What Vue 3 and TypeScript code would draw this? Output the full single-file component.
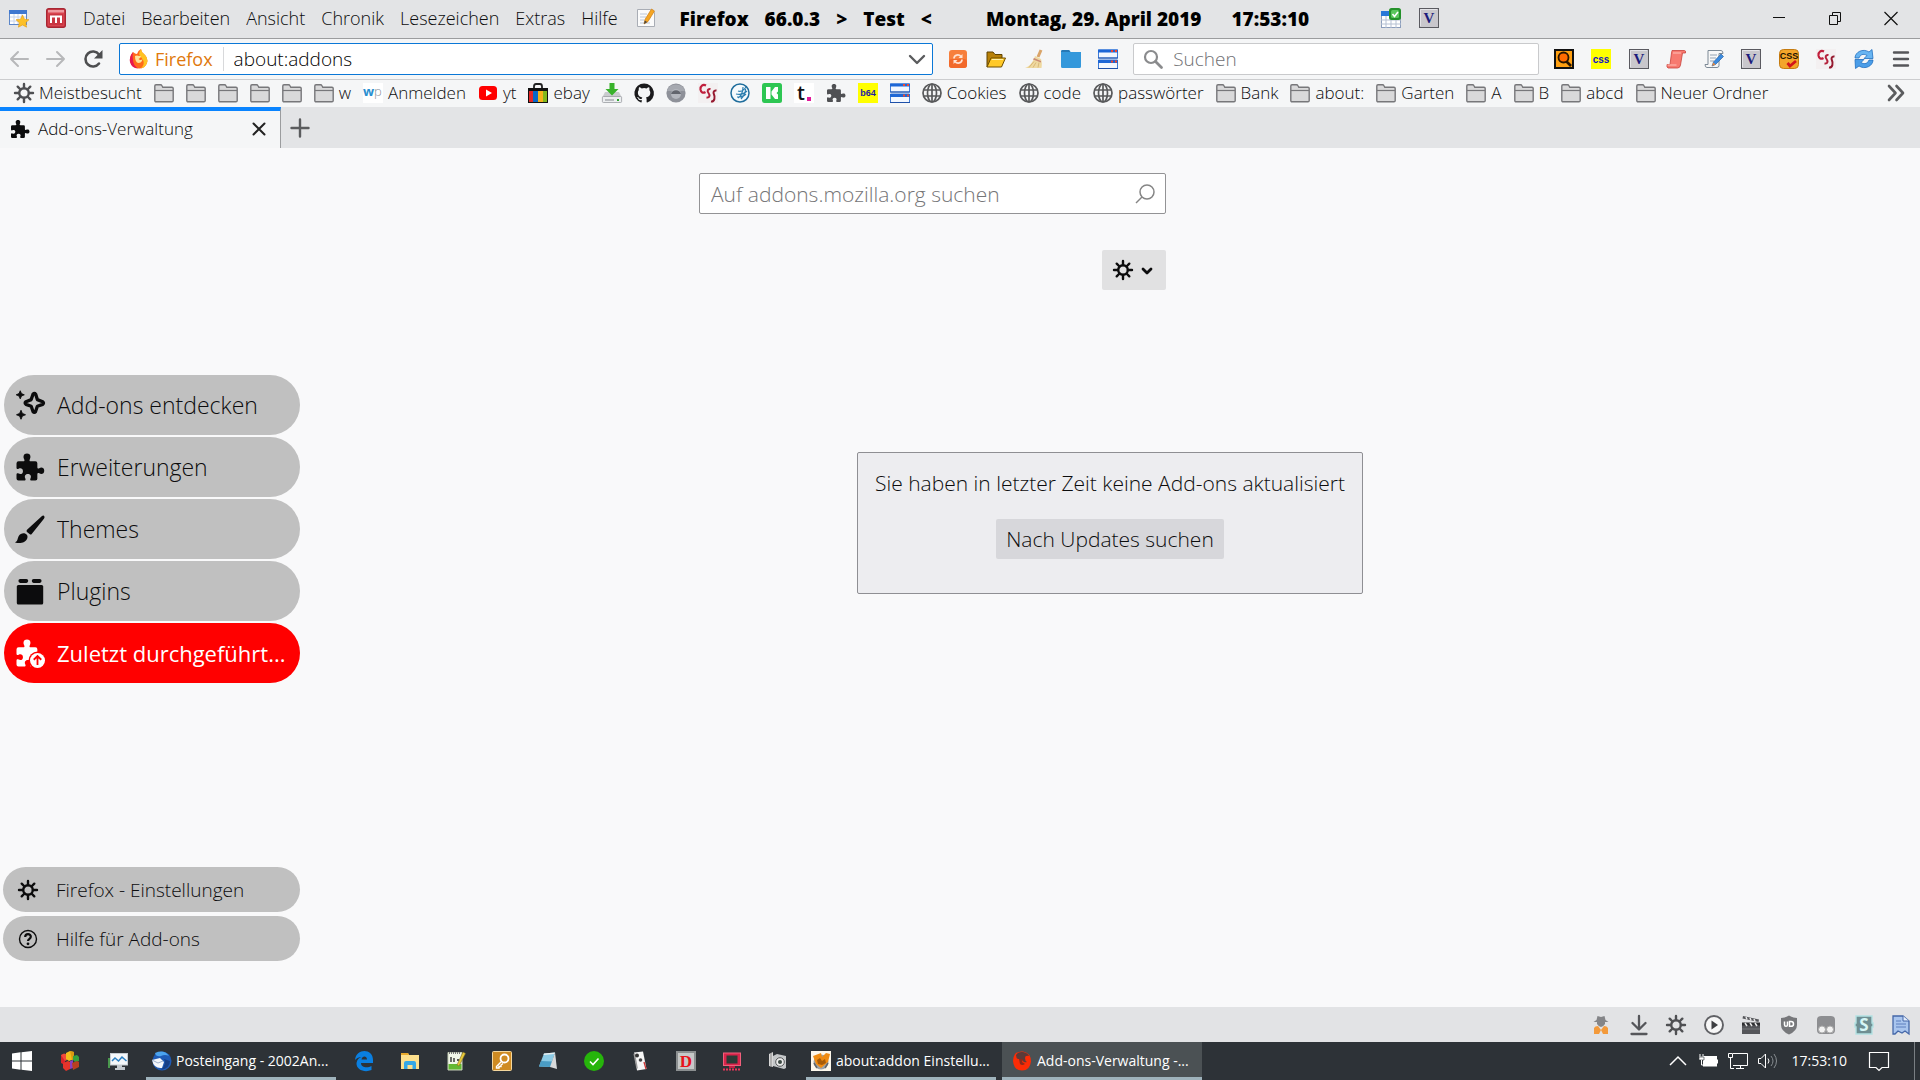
<script setup lang="ts">
interface Item {
  icon: string
  label?: string
}

const puzzle =
  '<path d="M1 7.6q0-1.4 1.400-1.400h3.100c.9 0 1-.8.6-1.400C5.300 3.400 5.500 1 8 1s2.700 2.400 1.900 3.800c-.4.6-.3 1.400.6 1.400h3.100q1.300 0 1.300 1.300v2.700c0 .8.7 1 1.300.6 1.300-.8 3.300-.5 3.300 1.700s-2 2.500-3.300 1.700c-.6-.4-1.300-.2-1.300.6v3q0 1.200-1.300 1.200h-2.500c-.9 0-1.200-.7-.8-1.400.7-1.200.3-2.900-1.700-2.900s-2.400 1.700-1.700 2.900c.4.700.1 1.400-.8 1.400H2.300Q1 19 1 17.700v-2.500c0-.9.7-1.200 1.400-.8 1.200.7 2.900.3 2.900-1.600s-1.700-2.300-2.900-1.600C1.700 11.600 1 11.300 1 10.500z"/>'

const gearSpokes =
  '<circle cx="10" cy="10" r="4.800" fill="none" stroke="currentColor" stroke-width="2.400"/><path d="M10 1v4M10 15v4M1 10h4M15 10h4M3.700 3.700l2.800 2.800M13.500 13.500l2.800 2.800M3.700 16.300l2.800-2.800M13.500 6.500l2.800-2.800" fill="none" stroke="currentColor" stroke-width="2.400" stroke-linecap="round"/>'

const vBox =
  '<rect x=".5" y=".5" width="19" height="19" fill="#c9c7cc" stroke="#5a5a60"/><path d="M1.500 18V1.500H18" stroke="#e4e4e8" fill="none"/><text x="10" y="15" text-anchor="middle" font-family="Liberation Serif, serif" font-size="15" font-weight="700" fill="#1c1c7c">V</text>'

const cssScript =
  '<rect width="20" height="20" fill="#f3f0f1"/><path d="M8 2.500C5 1 2 3 2.500 6.500 3 9.500 5 10.500 7.500 9" fill="none" stroke="#c01f3c" stroke-width="2.200"/><path d="M12.500 6c-3-.5-3.500 2-2 4s1.500 5-2 4.500" fill="none" stroke="#b3203a" stroke-width="2"/><path d="M18.500 7.500c-3-.5-3.500 2-2.500 4s1 7.500-3 7" fill="none" stroke="#961a30" stroke-width="2"/>'

const server =
  '<path d="M.5 1h19v8H.5z" fill="#f2f7ff" stroke="#3f7cd8"/><path d="M0 .5h20v3H0z" fill="#1d66d6"/><path d="M0 9h20" stroke="#1d4fa8"/><path d="M.5 11h19v8.500H.5z" fill="#f2f7ff" stroke="#3f7cd8"/><path d="M0 11h20v3H0z" fill="#1d66d6"/><path d="M0 19.500h20" stroke="#1d4fa8"/><path d="M13 2h2M17 2h2M13 12.500h2M17 12.500h2" stroke="#f04a30" stroke-width="2"/>'

const firefox =
  '<path d="M4 3q2 2 4 2 1-3.500 4-5 0 2.500 3 5 4.500 4 3 9-2 5.500-8 5.500T1 13Q.5 7 4 3z" fill="#ff6a1a"/><path d="M12 0q0 2.500 3 5 4.500 4 3 9-1.500 4.500-6 5.300 3.500-3.300 2.500-7.300Q13 9 11 7T12 0z" fill="#ffc322"/><path d="M4 3Q0 8 1 13q1.500 6 8 6.500Q4 16 4 11q-1-4 0-8z" fill="#e8184f"/><path d="M6 7q2-1 4 0h2q0 2-2.500 3 1.500 1.500 4 .5-1 3.500-4 3.500Q6 13.500 6 7z" fill="#ffe39a"/>'

const icons: Record<string, string> = {
  puzzle: `<g fill="currentColor">${puzzle}</g>`,
  gear: gearSpokes,
  vbox: vBox,
  cssScript,
  server,
  firefox,
  calendarStar:
    '<rect x=".5" y="2.500" width="17" height="14" fill="#fff" stroke="#5b86c9"/><rect y="2" width="18" height="4" fill="#3f78d0"/><path d="M1 9h16M1 13h16M5 6v10M9 6v10M13 6v10" stroke="#c8d4ea"/><path d="M13.500 7l2 4.200 4.500.5-3.300 3 .9 4.500-4.100-2.200-4.100 2.200.9-4.500-3.300-3 4.500-.5z" fill="#fcc028" stroke="#e29b10" stroke-width=".6"/>',
  mBox:
    '<rect x=".7" y=".7" width="18.600" height="18.600" rx="2" fill="#d9434e" stroke="#a82633" stroke-width="1.400"/><rect x="2" y="2" width="16" height="2.500" fill="#ef9aa0"/><rect x="3" y="6" width="14" height="11" fill="#c93642"/><path d="M5 15V8.500h10V15M10 8.500V15" stroke="#fff" stroke-width="2" fill="none"/>',
  noteEdit:
    '<path d="M1.500 1.500h13l4 3v14h-17z" fill="#fbfbfb" stroke="#a9adb5"/><path d="M4 6h7M4 9h6M4 12h4M4 15h10" stroke="#bcc7d8"/><path d="M8 16l1-4.500L15.500 1l3 2-6.500 10.500z" fill="#f6a623" stroke="#c97b16" stroke-width=".7"/><path d="M8 16l.8-3.500 2.400 1.500z" fill="#444"/>',
  calendarCheck:
    '<rect x=".5" y="4.500" width="19" height="15" fill="#fff" stroke="#8b9dbb"/><rect y="3" width="12" height="5" fill="#2878d8"/><path d="M0 12h20M0 16h20M5 8v12M10 8v12M15 8v12" stroke="#b5c0d2"/><rect x="8" y="0" width="12" height="12" rx="2.500" fill="#24912a"/><rect x="10" y="2" width="8" height="8" rx="1.500" fill="#5bc65c"/><path d="M11.500 6l2 2.500 3.500-4.500" stroke="#fff" stroke-width="1.600" fill="none"/>',
  minimize: '<path d="M4 9.500h12" stroke="#111" fill="none"/>',
  restore: '<path d="M4.500 7.500h8v9h-8zM7.500 7V4.500h8v9H13" stroke="#111" fill="none"/>',
  windowClose: '<path d="M3.500 4l13 13M16.500 4l-13 13" stroke="#111" stroke-width="1.200" fill="none"/>',
  back: '<path d="M19 10H2M9 3l-7 7 7 7" stroke="#b7b8ba" stroke-width="2" fill="none" stroke-linecap="round" stroke-linejoin="round"/>',
  forward: '<path d="M1 10h17M11 3l7 7-7 7" stroke="#b7b8ba" stroke-width="2" fill="none" stroke-linecap="round" stroke-linejoin="round"/>',
  reload: '<path d="M16 14.500A7.500 7.500 0 1 1 16 5.500" stroke="#4d4e50" stroke-width="2.600" fill="none" stroke-linecap="round"/><path d="M19.500 1v8.500H11z" fill="#4d4e50"/>',
  chevron: '<path d="M3 7l7 7 7-7" stroke="#5b5c5e" stroke-width="2.400" fill="none" stroke-linecap="round" stroke-linejoin="round"/>',
  orangeSync:
    '<rect x="1" y="1" width="18" height="18" rx="3" fill="#f77f3c"/><rect x="1" y="10" width="18" height="9" rx="3" fill="#f2692b"/><path d="M6 9.500C6 5.500 11 5 13 7.500M14 10.500c0 4-5 4.500-7 2" stroke="#ffe3d3" stroke-width="1.700" fill="none"/><path d="M14.500 5v4h-4zM5.500 15v-4h4z" fill="#ffe3d3"/>',
  openFolder:
    '<path d="M1 18V3h6l2 2.500h7V9" fill="#b88108" stroke="#5f4300"/><path d="M1 18l4-9h14.500l-4 9z" fill="#ffc928" stroke="#6d4d00"/><path d="M6 10.500h11" stroke="#fff0a8"/>',
  broom:
    '<path d="M18 1l-3 7" stroke="#d9a469" stroke-width="3"/><path d="M12 7l6 3c1 3 1 6 .5 9H2c5-2 8-6 10-12z" fill="#efd9a0"/><path d="M11 9l7 3v1.500l-8-3z" fill="#c98a74"/><path d="M6 18.500l5-6M10 18.500l3-5M15 18.500l1-5" stroke="#d9b877"/>',
  blueFolder: '<path d="M0 3q0-2 1.500-2H8l1.500 2H20v14.500q0 1.500-1.500 1.500h-17Q0 19 0 17.500z" fill="#3498db"/><path d="M0 3q0-2 1.500-2H8l1.500 2z" fill="#2779b5"/>',
  magnifier: '<circle cx="8" cy="8" r="6" stroke="#8a8b8d" stroke-width="2.200" fill="none"/><path d="M12.500 12.500l6 6" stroke="#8a8b8d" stroke-width="2.800" stroke-linecap="round"/>',
  orangeSearch:
    '<rect x="1" y="1" width="18" height="18" fill="#ffa012" stroke="#111" stroke-width="2"/><circle cx="9.500" cy="8.500" r="5" fill="#ff6a00" stroke="#2a1600" stroke-width="1.800"/><path d="M12.500 12.500l4.500 4.500" stroke="#2a1600" stroke-width="2.600"/>',
  cssYellow:
    '<rect width="20" height="20" fill="#ff0"/><text x="10" y="13.500" text-anchor="middle" font-family="Liberation Sans, sans-serif" font-size="10" font-weight="700" fill="#1212c8">css</text>',
  redScroll:
    '<path d="M6 1.500h12.500q1.500 0 1 2.500h-3l-2 12q-.5 3-3 3H2q-1.500-.5-1-3.500h3L5.500 4Q6 1.500 6 1.500z" fill="#f77a70" stroke="#c9433c" stroke-width=".8"/><path d="M7 4h8M1.500 16h9" stroke="#ffc0b8"/>',
  scrollEdit:
    '<path d="M4 1.500h13q2 0 2 3h-4v12q0 2-2 2H3q-2 0-2-3h3z" fill="#f7f7f7" stroke="#7d8a96"/><path d="M6 6h7M6 9h6M6 12h4" stroke="#94a3b3"/><path d="M8 17l1.500-4L17 5l2.500 2.500-8 8z" fill="#3b8be0" stroke="#1d5597" stroke-width=".6"/><path d="M8 17l1.300-3.600 2.300 2z" fill="#e9893b"/>',
  cssOrange:
    '<rect x=".5" y=".5" width="19" height="19" rx="4" fill="#f3a52a" stroke="#c47b10"/><text x="10" y="9.500" text-anchor="middle" font-family="Liberation Sans, sans-serif" font-size="9" font-weight="700" fill="#1d1200">CSS</text><path d="M8.500 14l2.500 3 6-5" stroke="#d3151b" stroke-width="2.800" fill="none"/>',
  blueSync:
    '<path d="M1 9C1 3 9-1 15 3l3-2.500 1 9h-9l3-3C9 4 6 6 5 9z" fill="#68b5f2" stroke="#1f6fc0" stroke-width=".8"/><path d="M19 11c0 6-8 10-14 6l-3.500 2.500-.5-9h9l-3 3c4 2.500 7 .5 8-2.500z" fill="#4a9de8" stroke="#1f6fc0" stroke-width=".8"/>',
  menu: '<path d="M3 3.500h14M3 10h14M3 16.500h14" stroke="#55565a" stroke-width="2.400" stroke-linecap="round"/>',
  folder:
    '<path d="M.8 17.500V3q0-1.200 1.200-1.200h4.500q1 0 1.500 1l.8 1.500H18q1.200 0 1.200 1.200v12q0 1.200-1.200 1.200H2q-1.200 0-1.200-1.200z" fill="#d9d9da" stroke="#77777a" stroke-width="1.400"/><path d="M1 7.500h18" stroke="#77777a" stroke-width="1.200"/>',
  wp: '<rect width="20" height="20" fill="#fff"/><text x="0" y="13" font-family="Open Sans, sans-serif" font-size="13" font-weight="700" fill="#2a8fd0">w</text><text x="11" y="13" font-family="Open Sans, sans-serif" font-size="13" fill="#8a8f96">p</text>',
  youtube: '<rect x="1" y="3" width="18" height="14" rx="3.500" fill="#f00"/><path d="M8 6.500v7l6-3.500z" fill="#fff"/>',
  ebay:
    '<path d="M6 6V3.500Q6 1 8 1h4q2 0 2 2.500V6" stroke="#222" stroke-width="1.800" fill="none"/><path d="M0 5h20v4H0z" fill="#111"/><path d="M0 8h5v12H0z" fill="#e32828"/><path d="M5 8h5v12H5z" fill="#0868c9"/><path d="M10 8h5v12h-5z" fill="#f6b21b"/><path d="M15 8h5v12h-5z" fill="#82b81c"/><path d="M0 19h20v1H0zM0 5h1v15H0zM19 5h1v15h-1z" fill="#111"/>',
  drive:
    '<path d="M3 9h14l3 6H0z" fill="#c9cbce"/><rect x=".4" y="13.500" width="19.200" height="6" rx="1" fill="#eceef0" stroke="#9a9da2" stroke-width=".8"/><path d="M3 17h9" stroke="#85898f"/><path d="M15 17h2" stroke="#2aa62c" stroke-width="2"/><path d="M7.500 0h5v6h4L10 12.500 3.500 6h4z" fill="#38b22b"/>',
  github:
    '<path d="M10 .5a9.700 9.700 0 0 0-3 18.900c.5.1.7-.2.7-.5v-1.800c-2.800.6-3.300-1.200-3.300-1.200-.4-1.100-1.100-1.400-1.100-1.400-.9-.6.1-.6.1-.6 1 .1 1.500 1 1.500 1 .9 1.500 2.300 1.100 2.900.8.100-.6.3-1.100.6-1.300-2.200-.3-4.500-1.100-4.500-4.800 0-1.100.4-2 1-2.600-.1-.3-.4-1.300.1-2.600 0 0 .8-.3 2.700 1a9.200 9.200 0 0 1 4.900 0c1.800-1.300 2.600-1 2.600-1 .5 1.300.2 2.300.1 2.600.6.700 1 1.500 1 2.600 0 3.700-2.200 4.500-4.400 4.800.4.300.7.900.7 1.800v2.700c0 .3.200.6.7.5A9.700 9.700 0 0 0 10 .5z" fill="#1a1a1c"/>',
  sphere: '<circle cx="10" cy="10" r="9.600" fill="#8e9199"/><path d="M1 8a9.500 9.500 0 0 1 18 0z" fill="#a6a9b0"/><circle cx="10" cy="11" r="5" fill="#b4b7be"/><path d="M5 11a5.200 5.200 0 0 1 10 0z" fill="#62656d"/>',
  blueGlobe:
    '<circle cx="10" cy="10" r="9" fill="#f6fafc" stroke="#1f6d9c" stroke-width="1.500"/><path d="M8 8c3 1 6-1 8-4M6 11c4 1 8 0 11-3M8 15c3-2 5-6 5-11M11 16c3-3 4.500-6 4.500-10M7 14c4 0 7-1 9-3" stroke="#2d7fb0" stroke-width="1.200" fill="none"/>',
  greenK: '<rect width="20" height="20" rx="2.500" fill="#2dc653"/><path d="M4 4h4.500v12H4zM9.500 8.500L13 4h3v4.500L14.500 10l1.500 1.500V16h-3l-3.500-4.500z" fill="#fff"/>',
  tDot: '<rect width="20" height="20" fill="#fff"/><text x="3" y="17" font-family="Open Sans, sans-serif" font-size="20" font-weight="600" fill="#111">t</text><rect x="13" y="14" width="4" height="4" fill="#e0189a"/>',
  b64: '<rect width="20" height="20" fill="#ff0"/><text x="10" y="13" text-anchor="middle" font-family="Liberation Sans, sans-serif" font-size="9" font-weight="700" fill="#1c1ca0">b64</text>',
  globe:
    '<g fill="none" stroke="#58595b" stroke-width="1.700"><circle cx="10" cy="10" r="9"/><ellipse cx="10" cy="10" rx="4.500" ry="9"/><path d="M10 1v18M2 7h16M2 13h16"/></g>',
  overflow: '<path d="M3 3l6.500 7L3 17M10.500 3l6.500 7-6.500 7" stroke="#5b5c5e" stroke-width="2.600" fill="none" stroke-linecap="round" stroke-linejoin="round"/>',
  tabClose: '<path d="M4.500 4.500l11 11M15.500 4.500l-11 11" stroke="#222" stroke-width="2" stroke-linecap="round"/>',
  plus: '<path d="M10 1.500v17M1.500 10h17" stroke="#5b5c5e" stroke-width="2.400" stroke-linecap="round"/>',
  lens: '<circle cx="12" cy="8" r="7" stroke="#858585" stroke-width="1.500" fill="none"/><path d="M7 13l-6 6" stroke="#858585" stroke-width="1.500"/>',
  smallChevron: '<path d="M6 9l4 4 4-4" stroke="currentColor" stroke-width="2.800" fill="none" stroke-linecap="round" stroke-linejoin="round"/>',
  sparkle:
    '<path d="M12 2.800Q13 1.800 13.800 2.800l1.100 3.600 3.600 1.400q1 .8 0 1.800l-3.600 1.200-1.200 3.600q-.8 1-1.700 0l-1.200-3.600-3.500-1.200q-1.100-1 0-1.800l3.500-1.400z" fill="none" stroke="currentColor" stroke-width="2.200" stroke-linejoin="round"/><path d="M3.500.5l.8 1.900 1.900.8-1.900.8-.8 1.900-.8-1.900-1.900-.8 1.900-.8zM4 13.500l.9 2.100 2.100.9-2.100.9-.9 2.100-.9-2.100-2.100-.9 2.100-.9z" fill="currentColor" stroke="currentColor" stroke-width=".6"/>',
  brush:
    '<path d="M8 10.500L18 1.300q1.200-.6 1.600.4.300.7-.3 1.500L11 13.500Q10.500 14 9.700 13.300L8 12q-.7-.7 0-1.500z" fill="currentColor"/><path d="M7 13.200q1.800.8 1.200 3C7 19.500 3 19.800 0 19c2-1 1.500-2.500 2.500-4.300 1-1.600 2.900-2.200 4.500-1.500z" fill="currentColor"/>',
  brick: '<rect x="1.200" y="6" width="17.600" height="13" rx="1" fill="currentColor"/><rect x="2.300" y="2" width="6.500" height="2.600" rx="1.200" fill="currentColor"/><rect x="11.200" y="2" width="6.500" height="2.600" rx="1.200" fill="currentColor"/>',
  puzzleUpdate: `<g fill="currentColor">${puzzle}</g><circle cx="15" cy="15" r="6" fill="#f00"/><circle cx="15" cy="15" r="5" fill="#fff"/><path d="M15 18v-5.500M12.500 14.500L15 12l2.500 2.500" stroke="#f00" stroke-width="1.200" fill="none"/>`,
  help: '<circle cx="10" cy="10" r="8.500" fill="none" stroke="currentColor" stroke-width="1.400"/><path d="M7.200 8c0-3.800 5.800-3.600 5.600-.2 0 2-2.800 2-2.800 4.200" fill="none" stroke="currentColor" stroke-width="2.200"/><circle cx="10" cy="14.800" r="1.400" fill="currentColor"/>',
  spy:
    '<path d="M2.500 7h15L14.500 5 13.500 1 10 2 6.500 1l-1 4zM6 7h8v2q-2 3-4 3T6 9z" fill="#848588"/><path d="M3 13q1-2 4-2l3 4 3-4q3 0 4 2v6h-5l-2-4-2 4H3z" fill="#f39a3b"/>',
  download: '<path d="M10 1v13M3.500 8L10 14.500 16.500 8M2.500 19h15" stroke="#55565a" stroke-width="2.300" fill="none" stroke-linecap="round" stroke-linejoin="round"/>',
  play: '<circle cx="10" cy="10" r="9" fill="#f7f7f7" stroke="#606165" stroke-width="1.900"/><path d="M7.500 5.500v9l6.500-4.500z" fill="#3e3f42"/>',
  clapper:
    '<path d="M1 9h18v10H1z" fill="#55565a"/><path d="M1 7.500h18v3H1z" fill="#2e2f31"/><path d="M2 1l16 3.500-.5 2.500L1.500 3.500z" fill="#55565a"/><path d="M5 2l1 2.500M9 3l1 2.500M13 4l1 2.500M4 8l2 3M9 8l2 3M14 8l2 3" stroke="#e8e8e8" stroke-width="1.500"/><path d="M1 14h18" stroke="#77787b"/>',
  ublock:
    '<path d="M10 .5q4 2.500 8 2.500v7q0 6-8 9.500Q2 16 2 10V3q4 0 8-2.500z" fill="#77787b"/><path d="M5.500 6.500v3.200q0 1.600 1.500 1.600t1.500-1.600V6.500" stroke="#fff" stroke-width="1.500" fill="none"/><path d="M10.500 6.500h1.500q2.500 0 2.500 2.400T12 11.300h-1.500z" stroke="#fff" stroke-width="1.500" fill="none"/>',
  eyes: '<rect x="1" y="1" width="18" height="18" rx="4" fill="#8d8e91"/><circle cx="6" cy="14.500" r="3.500" fill="#f2f2f2" stroke="#aaa"/><circle cx="14" cy="14.500" r="3.500" fill="#f2f2f2" stroke="#aaa"/>',
  stylus: '<path d="M2 1h16v7h1v4h-1v7H2v-7H1V8h1z" fill="#6f8f93" stroke="#b4e2e3" stroke-width="1.400"/><text x="10" y="16" text-anchor="middle" font-family="Open Sans, sans-serif" font-size="17" font-weight="700" fill="#d6f6f6">S</text>',
  page: '<path d="M2 1h10l6 5v13l-4-3-3 2-4-2-3 3H2z" fill="#a9c5ee" stroke="#4467a8" stroke-width="1.300"/><path d="M12 1v5h6" fill="#e4eefc" stroke="#4467a8"/><path d="M5 6h5M5 9h10M5 12h10" stroke="#5d7fbe"/>',
  windows: '<path d="M0 2.500L8.500 1.300V9.500H0zM9.500 1.200L20 0v9.500H9.500zM0 10.500h8.500v8.200L0 17.500zM9.500 10.500H20V20L9.500 18.800z" fill="#fff"/>',
  cubes:
    '<path d="M1 4l4-1v11l-4-2z" fill="#d8232a"/><path d="M1 4l3-1.500 3 1V9l-2 1z" fill="#f04a3a"/><path d="M6 2l4-2 4 1v7l-5 2-3-2z" fill="#f2bd1c"/><path d="M10 0l4 1v7l-2 1z" fill="#d99a10"/><path d="M13 5l4-1 2 2v4l-4 1-2-2z" fill="#35a13f"/><path d="M3 12l5-2 2 1v7l-4 2-3-3z" fill="#e5342b"/><path d="M10 10l3-1v8l-3 1z" fill="#8a3fc0"/><path d="M12 12l5-2 2 1v5l-6 3z" fill="#b8401f"/>',
  monitor:
    '<rect x="2.500" y="2.500" width="17" height="11.500" fill="#f4f7fa" stroke="#c6ccd2"/><path d="M4 10l3-3 3.500 3L14 6l4.500 4" stroke="#2b7fc2" stroke-width="1.500" fill="none"/><path d="M9 14h5v2h3v3H7v-2h2z" fill="#c2c8ce"/><path d="M1 7v10" stroke="#5bd15b" stroke-width="1.300"/>',
  thunderbird:
    '<circle cx="11" cy="10" r="9.500" fill="#1f5bb5"/><path d="M4 2q9-4 14 3-4-2-8 0Q5 6 4 2z" fill="#4ba3ee"/><path d="M1 9l8-2 4 4-2 6Q3 18 1 9z" fill="#f4f6fa"/><path d="M1 9l6 3 5-2" stroke="#9bb0cc" fill="none"/><path d="M13 8q3 4-3 11 9-2 9-9z" fill="#163f86"/>',
  edge: '<path d="M1 9C2-3 19-3 19 9v3H7c0 5 7 5 10.500 3v4C11 22 2 19 2.500 12 3 8.500 5 7 7.500 6 4.500 6 2 7.500 1 9zm6.500-.5H13c0-4-5-4-5.500 0z" fill="#0a7fe0"/>',
  explorer: '<path d="M1 2h7l1 2h10v14H1z" fill="#fde08d"/><path d="M1 2h7l1 2H1z" fill="#e8a92c"/><path d="M4 18v-6q0-2 2-2h8q2 0 2 2v6h-3.500v-4h-5v4z" fill="#35a8e6"/>',
  notepad:
    '<path d="M2 1.500h14V19H2z" fill="#f1f6e8" stroke="#c3ccb5"/><path d="M2.500 13h13v5.500h-13z" fill="#63b832"/><path d="M3 2h12" stroke="#777" stroke-width="2" stroke-dasharray="1 1"/><path d="M5 6v5M8 7v4M11 9h2" stroke="#222" stroke-width="1.300"/><path d="M11 14L17 1l2.500 1.500L13 15z" fill="#e8c93a" stroke="#7a6a20" stroke-width=".6"/>',
  key: '<rect x=".5" y=".5" width="19" height="19" rx="1" fill="#cf8b22" stroke="#f4d79e"/><circle cx="12.500" cy="7.500" r="4" fill="none" stroke="#fff" stroke-width="1.800"/><path d="M9.500 10.500L4.500 15.500V17H7v-1.500h2V14l2-1.500" fill="none" stroke="#fff" stroke-width="1.400"/>',
  clipNote: '<path d="M6 2.500L17 1.500 12.500 16 1 15.500z" fill="#8ccbe6"/><path d="M3 10l11.500.5L12.500 16 1 15.500z" fill="#4a9cc4"/><path d="M6 2.500l11-1-.5 1.500L5.500 4z" fill="#e9eef0"/><path d="M17 1.500L19 18l-7-2z" fill="#d8dadb"/>',
  check: '<circle cx="10" cy="10" r="10" fill="#26b50b"/><path d="M6 10.500l3 3 5.500-6" stroke="#fff" stroke-width="1.600" fill="none"/>',
  card: '<path d="M4 1.500l9-1L16.500 18 7 19.500z" fill="#f6f6f6"/><path d="M3.500 3L5 2l3 16-2-2z" fill="#9c9c9c"/><circle cx="7" cy="4.500" r="2" fill="#333"/><circle cx="10.500" cy="9" r="1.800" fill="#444"/><path d="M14 11l2 7" stroke="#c33" stroke-width="1.300"/>',
  dBox:
    '<rect x="1" y="1" width="18" height="18" fill="#c6c8c8" stroke="#8b8f90" stroke-width="2"/><text x="10" y="16" text-anchor="middle" font-family="Liberation Serif, serif" font-size="17" font-weight="700" fill="#e8131a">D</text>',
  redMonitor: '<rect x="1.500" y="2" width="17" height="12.500" fill="#d8254a" stroke="#f0607c"/><rect x="4.500" y="4.500" width="11" height="8" fill="#2b3a36"/><path d="M7 15h6v2H7z" fill="#c41f42"/><path d="M1 18.500h18" stroke="#e8375a" stroke-width="2" stroke-dasharray="2 1"/>',
  camera: '<path d="M1 3l4-2v15l-4-1z" fill="#d8d8d8"/><path d="M3 2v14" stroke="#888"/><path d="M5 5l4-2 9 2v12l-2 1-11-3z" fill="#c4c7c9"/><circle cx="12" cy="11" r="4.300" fill="#ececec" stroke="#55585a"/><circle cx="12" cy="11" r="2" fill="#3c4a44"/>',
  orangeBug: '<rect width="20" height="20" fill="#fdf8ec"/><circle cx="10" cy="11" r="7.500" fill="#9fa4a8"/><path d="M2 5l8-3 1 4 4-4 4 1-2 8-7 6-5-4z" fill="#f08c12"/><path d="M6 9l3-2 2 3 3-2 1 4-4 2-4-1z" fill="#a85c08"/><path d="M3 12l3 5M17 12l-3 5" stroke="#5f656a" stroke-width="1.500"/>',
  redFox: '<path d="M3 3q3-3 8-2.500 8 1.500 8 10-1 9-9 9T1 10Q1 6 3 3z" fill="#fb2c06"/><path d="M4 4q2-3.500 7-3 5 1 6 4-4-1-4 2t2 4q-3 1-4-1L9 8 6 8Q4 7 4 4z" fill="#5b3a38"/><path d="M7 8h4l-1 3 3 2q-3 2-5 0z" fill="#8b2a1c"/>',
  trayUp: '<path d="M2 14l8-8 8 8" stroke="#fff" stroke-width="1.500" fill="none"/>',
  battery: '<rect x="5.500" y="5.500" width="13" height="9.500" fill="#fff" stroke="#fff"/><path d="M19.500 8.500v4" stroke="#fff"/><path d="M1 6h5M2 3v3M5 3v3" stroke="#fff" fill="none"/><path d="M1 6h5v3H1z" fill="#fff" stroke="#2d3237" stroke-width=".6"/><path d="M3.500 9v5h2" stroke="#fff" fill="none"/>',
  network: '<path d="M5 2.500h14.500v12H5M12.500 14.500V17M8 17.500h8M.5 2.500h4v4h-4zM2.500 6.500v11H6" stroke="#fff" fill="none"/>',
  speaker: '<path d="M.5 7.500H3L7.500 3v14L3 12.500H.5z" stroke="#fff" fill="none"/><path d="M10 7.500q2 2.500 0 5" stroke="#fff" fill="none"/><path d="M13 5q4 5 0 10M16 3q5 7 0 14" stroke="#888e92" fill="none"/>',
  notification: '<path d="M.5 1.500h19v15h-6.500L10 19.500 7 16.500H.5z" stroke="#fff" stroke-width="1.200" fill="none"/>',
}

const menuItems: string[] = ['Datei', 'Bearbeiten', 'Ansicht', 'Chronik', 'Lesezeichen', 'Extras', 'Hilfe']
const titleParts: string[] = ['Firefox', '66.0.3', '>', 'Test', '<']
const navIcons: string[] = ['orangeSync', 'openFolder', 'broom', 'blueFolder', 'server']
const toolIcons: string[] = ['orangeSearch', 'cssYellow', 'vbox', 'redScroll', 'scrollEdit', 'vbox', 'cssOrange', 'cssScript', 'blueSync', 'menu']

const bookmarks: Item[] = [
  { icon: 'gear', label: 'Meistbesucht' },
  { icon: 'folder' },
  { icon: 'folder' },
  { icon: 'folder' },
  { icon: 'folder' },
  { icon: 'folder' },
  { icon: 'folder', label: 'w' },
  { icon: 'wp', label: 'Anmelden' },
  { icon: 'youtube', label: 'yt' },
  { icon: 'ebay', label: 'ebay' },
  { icon: 'drive' },
  { icon: 'github' },
  { icon: 'sphere' },
  { icon: 'cssScript' },
  { icon: 'blueGlobe' },
  { icon: 'greenK' },
  { icon: 'tDot' },
  { icon: 'puzzle' },
  { icon: 'b64' },
  { icon: 'server' },
  { icon: 'globe', label: 'Cookies' },
  { icon: 'globe', label: 'code' },
  { icon: 'globe', label: 'passwörter' },
  { icon: 'folder', label: 'Bank' },
  { icon: 'folder', label: 'about:' },
  { icon: 'folder', label: 'Garten' },
  { icon: 'folder', label: 'A' },
  { icon: 'folder', label: 'B' },
  { icon: 'folder', label: 'abcd' },
  { icon: 'folder', label: 'Neuer Ordner' },
]

const categories: Item[] = [
  { icon: 'sparkle', label: 'Add-ons entdecken' },
  { icon: 'puzzle', label: 'Erweiterungen' },
  { icon: 'brush', label: 'Themes' },
  { icon: 'brick', label: 'Plugins' },
  { icon: 'puzzleUpdate', label: 'Zuletzt durchgeführt...' },
]
const activeCategory = 4

const footerLinks: Item[] = [
  { icon: 'gear', label: 'Firefox - Einstellungen' },
  { icon: 'help', label: 'Hilfe für Add-ons' },
]

const statusIcons: string[] = ['spy', 'download', 'gear', 'play', 'clapper', 'ublock', 'eyes', 'stylus', 'page']
const pinnedLeft: string[] = ['windows', 'cubes', 'monitor']
const pinnedRight: string[] = ['edge', 'explorer', 'notepad', 'key', 'clipNote', 'check', 'card', 'dBox', 'redMonitor', 'camera']
const trayIcons: string[] = ['trayUp', 'battery', 'network', 'speaker']
</script>

<template>
  <div class="desktop">
    <header class="menubar">
      <button class="icon-btn" aria-label="calendarStar"><svg class="ico" viewBox="0 0 20 20" v-html="icons.calendarStar"></svg></button>
      <button class="icon-btn second" aria-label="mBox"><svg class="ico" viewBox="0 0 20 20" v-html="icons.mBox"></svg></button>
      <nav class="menus">
        <button v-for="m in menuItems" :key="m">{{ m }}</button>
      </nav>
      <button class="icon-btn" aria-label="noteEdit"><svg class="ico" viewBox="0 0 20 20" v-html="icons.noteEdit"></svg></button>
      <div class="title">
        <span v-for="t in titleParts" :key="t">{{ t }}</span>
      </div>
      <div class="date">Montag, 29. April 2019</div>
      <div class="time">17:53:10</div>
      <div class="menubar-icons">
        <button v-for="n in ['calendarCheck', 'vbox']" :key="n" class="icon-btn" :aria-label="n">
          <svg class="ico" viewBox="0 0 20 20" v-html="icons[n]"></svg>
        </button>
      </div>
      <div class="window-controls">
        <button v-for="n in ['minimize', 'restore', 'windowClose']" :key="n" class="icon-btn" :aria-label="n">
          <svg class="ico" viewBox="0 0 20 20" v-html="icons[n]"></svg>
        </button>
      </div>
    </header>

    <div class="navbar">
      <div class="nav-buttons">
        <button v-for="n in ['back', 'forward', 'reload']" :key="n" class="icon-btn" :aria-label="n">
          <svg class="ico" viewBox="0 0 20 20" v-html="icons[n]"></svg>
        </button>
      </div>
      <div class="urlbar">
        <svg class="ico" viewBox="0 0 20 20" v-html="icons.firefox"></svg>
        <span class="identity">Firefox</span>
        <input type="text" value="about:addons" aria-label="Adresse" />
        <button class="icon-btn" aria-label="chevron"><svg class="ico" viewBox="0 0 20 20" v-html="icons.chevron"></svg></button>
      </div>
      <div class="nav-icons">
        <button v-for="n in navIcons" :key="n" class="icon-btn" :aria-label="n">
          <svg class="ico" viewBox="0 0 20 20" v-html="icons[n]"></svg>
        </button>
      </div>
      <div class="searchbar">
        <svg class="ico" viewBox="0 0 20 20" v-html="icons.magnifier"></svg>
        <input type="text" placeholder="Suchen" aria-label="Suchen" />
      </div>
      <div class="tool-icons">
        <button v-for="(n, i) in toolIcons" :key="i" class="icon-btn" :aria-label="n">
          <svg class="ico" viewBox="0 0 20 20" v-html="icons[n]"></svg>
        </button>
      </div>
    </div>

    <div class="bookmarks">
      <div class="bookmark-list">
        <a v-for="(b, i) in bookmarks" :key="i" href="#" :aria-label="b.label ?? b.icon">
          <svg class="ico" viewBox="0 0 20 20" v-html="icons[b.icon]"></svg>
          <span v-if="b.label">{{ b.label }}</span>
        </a>
      </div>
      <button class="icon-btn" aria-label="overflow"><svg class="ico" viewBox="0 0 20 20" v-html="icons.overflow"></svg></button>
    </div>

    <div class="tabbar">
      <div class="tab">
        <svg class="ico" viewBox="0 0 20 20" v-html="icons.puzzle"></svg>
        <span>Add-ons-Verwaltung</span>
        <button class="icon-btn" aria-label="tabClose"><svg class="ico" viewBox="0 0 20 20" v-html="icons.tabClose"></svg></button>
      </div>
      <button class="icon-btn new-tab" aria-label="plus"><svg class="ico" viewBox="0 0 20 20" v-html="icons.plus"></svg></button>
    </div>

    <div class="page">
      <aside class="sidebar">
        <nav class="categories">
          <button v-for="(c, i) in categories" :key="c.label" :class="{ active: i === activeCategory }">
            <svg class="ico-large" viewBox="0 0 20 20" v-html="icons[c.icon]"></svg>
            <span>{{ c.label }}</span>
          </button>
        </nav>
        <nav class="footer-links">
          <a v-for="f in footerLinks" :key="f.label" href="#">
            <svg class="ico" viewBox="0 0 20 20" v-html="icons[f.icon]"></svg>
            <span>{{ f.label }}</span>
          </a>
        </nav>
      </aside>
      <main class="content">
        <div class="header">
          <div class="addon-search">
            <input type="text" placeholder="Auf addons.mozilla.org suchen" aria-label="Auf addons.mozilla.org suchen" />
            <svg class="ico" viewBox="0 0 20 20" v-html="icons.lens"></svg>
          </div>
          <button class="options" aria-label="gear">
            <svg class="ico" viewBox="0 0 20 20" v-html="icons.gear"></svg>
            <svg class="ico" viewBox="0 0 20 20" v-html="icons.smallChevron"></svg>
          </button>
        </div>
        <section class="notice">
          <p>Sie haben in letzter Zeit keine Add-ons aktualisiert</p>
          <button>Nach Updates suchen</button>
        </section>
      </main>
    </div>

    <div class="statusbar">
      <div class="status-icons">
        <button v-for="n in statusIcons" :key="n" class="icon-btn" :aria-label="n">
          <svg class="ico" viewBox="0 0 20 20" v-html="icons[n]"></svg>
        </button>
      </div>
    </div>

    <footer class="taskbar">
      <div class="pinned first">
        <button v-for="n in pinnedLeft" :key="n" class="icon-btn" :aria-label="n">
          <svg class="ico" viewBox="0 0 20 20" v-html="icons[n]"></svg>
        </button>
      </div>
      <button class="task">
        <svg class="ico" viewBox="0 0 20 20" v-html="icons.thunderbird"></svg>
        <span>Posteingang - 2002An...</span>
      </button>
      <div class="pinned">
        <button v-for="n in pinnedRight" :key="n" class="icon-btn" :aria-label="n">
          <svg class="ico" viewBox="0 0 20 20" v-html="icons[n]"></svg>
        </button>
      </div>
      <button class="task">
        <svg class="ico" viewBox="0 0 20 20" v-html="icons.orangeBug"></svg>
        <span>about:addon Einstellu...</span>
      </button>
      <button class="task current">
        <svg class="ico" viewBox="0 0 20 20" v-html="icons.redFox"></svg>
        <span>Add-ons-Verwaltung -...</span>
      </button>
      <div class="tray">
        <button v-for="n in trayIcons" :key="n" class="icon-btn" :aria-label="n">
          <svg class="ico" viewBox="0 0 20 20" v-html="icons[n]"></svg>
        </button>
        <span class="clock">17:53:10</span>
        <button class="icon-btn" aria-label="notification">
          <svg class="ico" viewBox="0 0 20 20" v-html="icons.notification"></svg>
        </button>
      </div>
    </footer>
  </div>
</template>

<style>
body {
  margin: 0;
}
</style>

<style scoped>
.desktop {
  display: flex;
  flex-direction: column;
  min-height: 100vh;
  background: #f9f9fa;
  color: #0c0c0d;
  font-family: 'Open Sans', 'Noto Sans', sans-serif;
  font-weight: 300;
  font-size: 18px;
  line-height: 24px;
  white-space: nowrap;
}
button,
input {
  border: 0;
  padding: 0;
  margin: 0;
  background: none;
  color: inherit;
  font: inherit;
}
input {
  outline: 0;
  min-width: 0;
  height: 30px;
  line-height: 30px;
}
a {
  color: inherit;
  text-decoration: none;
}
.icon-btn {
  display: flex;
  flex: none;
}
.ico,
.ico-large {
  display: block;
  flex: none;
  overflow: visible;
  width: 20px;
  height: 20px;
}
.ico-large {
  width: 30px;
  height: 30px;
}

.menubar {
  display: flex;
  align-items: center;
  box-sizing: border-box;
  height: 39px;
  padding: 0 19px 2px 9px;
  background: #e3e4e6;
  border-bottom: 1px solid #9b9c9e;
}
.menubar .second {
  margin-left: 17px;
}
.menus {
  display: flex;
  gap: 16px;
  margin: 0 18px 0 17px;
}
.title,
.date,
.time {
  padding-top: 2px;
  color: #000;
  font-size: 19px;
  font-weight: 800;
}
.title {
  display: flex;
  gap: 16px;
  margin-left: 24px;
}
.date {
  margin-left: 54px;
}
.time {
  margin-left: 30px;
}
.menubar-icons {
  display: flex;
  gap: 18px;
  margin-left: 72px;
}
.window-controls {
  display: flex;
  gap: 36px;
  margin-left: auto;
}

.navbar {
  display: flex;
  align-items: center;
  height: 40px;
  padding: 0 9px;
  background: #f5f6f7;
  border-bottom: 1px solid #cccdcf;
  font-size: 19px;
}
.nav-buttons {
  display: flex;
  gap: 17px;
  margin-right: 16px;
}
.urlbar,
.searchbar {
  display: flex;
  align-items: center;
  box-sizing: border-box;
  height: 32px;
  background: #fff;
  border: 1px solid #c9cacc;
  border-radius: 2px;
  padding: 0 5px 0 9px;
}
.urlbar {
  flex: 43;
  border-color: #0a78d7;
}
.searchbar {
  flex: 21;
}
.urlbar input,
.searchbar input {
  flex: 1;
  padding-left: 10px;
  color: #000;
}
.identity {
  color: #e0790c;
  font-size: 18px;
  font-weight: 400;
  padding: 0 10px 0 6px;
  border-right: 1px solid #d8d9db;
}
.searchbar input::placeholder {
  color: #6f7073;
  opacity: 1;
}
.nav-icons,
.tool-icons,
.status-icons {
  display: flex;
  justify-content: space-between;
}
.nav-icons {
  width: 170px;
  margin: 0 15px;
}
.tool-icons {
  width: 357px;
  margin-left: 15px;
}

.bookmarks {
  display: flex;
  align-items: center;
  justify-content: space-between;
  box-sizing: border-box;
  height: 27px;
  padding: 0 14px 2px;
  background: #f5f6f7;
  font-size: 17px;
}
.bookmark-list {
  display: flex;
  gap: 12px;
}
.bookmarks a {
  display: flex;
  align-items: center;
  gap: 5px;
}
.bookmarks .ico,
.statusbar .ico {
  color: #4f5053;
}

.tabbar {
  display: flex;
  height: 41px;
  background: #e3e4e6;
}
.tab {
  display: flex;
  align-items: center;
  box-sizing: border-box;
  width: 281px;
  padding: 0 11px 2px 10px;
  gap: 8px;
  background: #f5f6f7;
  border-top: 4px solid #0a84ff;
  border-right: 1px solid #9b9c9e;
  font-size: 17px;
}
.tab .icon-btn {
  margin-left: auto;
}
.new-tab {
  align-self: center;
  margin-left: 9px;
}

.page {
  display: flex;
  flex: 1;
}
.sidebar {
  display: flex;
  flex-direction: column;
  justify-content: space-between;
  width: 300px;
  padding: 227px 0 46px;
}
.categories,
.footer-links {
  display: flex;
  flex-direction: column;
  gap: 2px;
  padding-left: 4px;
}
.categories button {
  display: flex;
  align-items: center;
  gap: 12px;
  height: 60px;
  padding: 0 11px;
  background: #c0c0c0;
  border-radius: 30px;
  font-size: 23px;
}
.categories .active {
  background: #f00;
  color: #fff;
  font-size: 22px;
  font-weight: 400;
}
.footer-links {
  gap: 4px;
  padding-left: 3px;
}
.footer-links a {
  display: flex;
  align-items: center;
  gap: 18px;
  height: 45px;
  padding: 0 15px;
  background: #c0c0c0;
  border-radius: 23px;
  font-size: 19px;
}
.content {
  flex: 1;
  padding-top: 25px;
}
.header {
  display: flex;
  flex-direction: column;
  align-items: flex-end;
  width: 866px;
  gap: 36px;
}
.addon-search {
  display: flex;
  align-items: center;
  box-sizing: border-box;
  width: 467px;
  height: 41px;
  padding: 0 10px 0 11px;
  background: #fff;
  border: 1px solid #939395;
  border-radius: 2px;
  font-size: 21px;
}
.addon-search input {
  flex: 1;
}
.addon-search input::placeholder {
  color: #757577;
  opacity: 1;
}
.options {
  display: flex;
  align-items: center;
  gap: 4px;
  height: 40px;
  padding: 0 9px 0 11px;
  background: #e1e1e2;
  border-radius: 2px;
}
.notice {
  display: flex;
  flex-direction: column;
  align-items: center;
  box-sizing: border-box;
  width: 506px;
  height: 142px;
  margin: 162px auto 0;
  padding-top: 18px;
  background: #ededf0;
  border: 1px solid #8f8f93;
  border-radius: 2px;
  font-size: 21px;
}
.notice p {
  margin: 0 0 24px;
}
.notice button {
  height: 40px;
  padding: 0 10px;
  background: #d7d7db;
  border-radius: 2px;
}

.statusbar {
  display: flex;
  align-items: center;
  justify-content: flex-end;
  height: 35px;
  padding: 0 9px;
  background: #e2e3e5;
}
.status-icons {
  width: 320px;
}

.taskbar {
  display: flex;
  align-items: center;
  height: 38px;
  background: #2d3237;
  color: #fff;
  font-size: 14px;
  font-weight: 400;
}
.pinned {
  display: flex;
  gap: 26px;
  margin: 0 18px;
}
.pinned.first {
  gap: 28px;
  margin: 0 18px 0 12px;
}
.task {
  display: flex;
  align-items: center;
  box-sizing: border-box;
  width: 190px;
  height: 38px;
  gap: 5px;
  padding: 2px 5px 0;
  border-bottom: 3px solid #9fb3bc;
}
.task.current {
  width: 200px;
  margin-left: 6px;
  padding: 2px 10px 0;
  background: #4b5154;
}
.tray {
  display: flex;
  align-items: center;
  align-self: stretch;
  gap: 10px;
  margin-left: auto;
  margin-right: 5px;
  padding-right: 25px;
  border-right: 1px solid #7a7f83;
}
.clock {
  margin: 0 12px 0 4px;
}
</style>
